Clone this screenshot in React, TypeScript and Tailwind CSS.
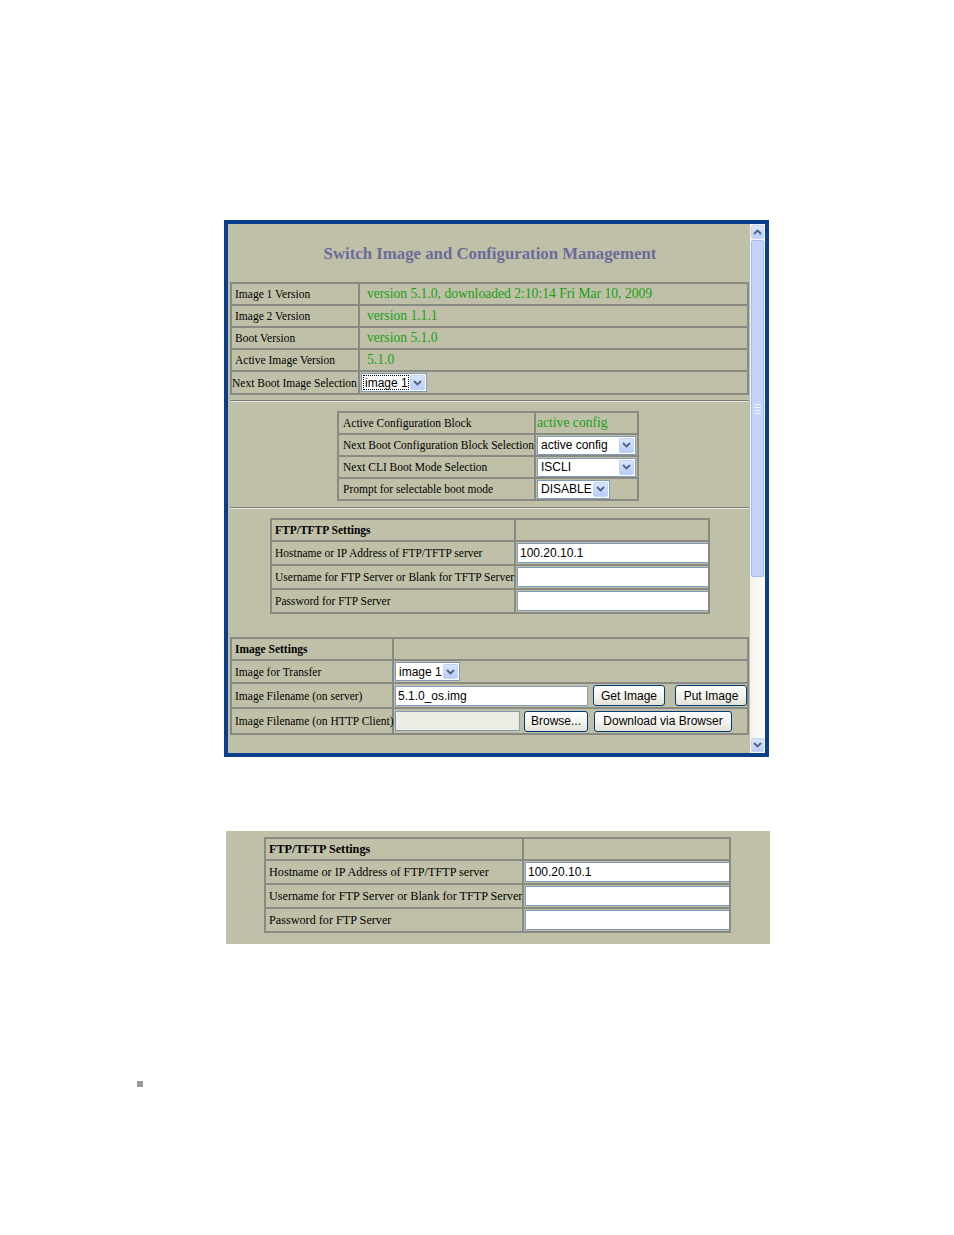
import React from "react";

const serif = { fontFamily: '"Liberation Serif", "Times New Roman", serif' };

const td = "border-2 border-[#8a8a84] align-middle p-0 text-[11.5px] leading-[12px] overflow-visible";
const label = "text-[11.5px] text-black leading-[12px] whitespace-nowrap";
const green = "text-[13.6px] text-[#15a015] leading-[14px] whitespace-nowrap";

function Chevron({ up = false }: { up?: boolean }) {
  return (
    <svg width="9" height="6" viewBox="0 0 9 6" className={up ? "rotate-180" : ""}>
      <path d="M1 1 L4.5 4.5 L8 1" fill="none" stroke="#4d6185" strokeWidth="1.8" />
    </svg>
  );
}

function Select({ value, w, focus = false }: { value: string; w: string; focus?: boolean }) {
  return (
    <div className={`${w} h-[19px] flex items-center bg-white border border-[#7f9db9] box-border`}>
      <div
        className={`flex-1 h-full flex items-center pl-[3px] text-[12px] leading-[14px] text-black whitespace-nowrap ${
          focus ? "outline-1 outline-dotted outline-black -outline-offset-2" : ""
        }`}
        style={{ fontFamily: '"Liberation Sans", Arial, sans-serif' }}
      >
        {value}
      </div>
      <div className="w-[15px] h-[15px] mr-[1px] flex items-center justify-center rounded-[2px] bg-gradient-to-b from-[#dbe6fd] to-[#b7cbf8] border border-[#c4d3f6]">
        <Chevron />
      </div>
    </div>
  );
}

function TextBox({ value = "", w, grey = false }: { value?: string; w: string; grey?: boolean }) {
  return (
    <div
      className={`${w} h-[20px] flex items-center pl-[2px] border border-[#7f9db9] text-[12px] leading-[14px] text-black ${
        grey ? "bg-[#ecebe4]" : "bg-white"
      }`}
      style={{ fontFamily: '"Liberation Sans", Arial, sans-serif' }}
    >
      {value}
    </div>
  );
}

function Btn({ children, w }: { children: React.ReactNode; w: string }) {
  return (
    <div
      className={`${w} h-[21px] flex items-center justify-center rounded-[3px] border border-[#003c74] bg-gradient-to-b from-white via-[#f5f4ef] to-[#e3e1d6] text-[12px] leading-[14px] text-black whitespace-nowrap`}
      style={{ fontFamily: '"Liberation Sans", Arial, sans-serif' }}
    >
      {children}
    </div>
  );
}

function Hr() {
  return <div className="h-[2px] border-t border-[#7d7d78] border-b border-b-[#e9e9dc] mr-[1px]" />;
}

function Scrollbar() {
  return (
    <div className="w-[15px] shrink-0 flex flex-col bg-[#f4f3ee] pt-[1px] pb-[1px]">
      <div className="h-[14px] shrink-0 mx-[1px] flex items-center justify-center rounded-[2px] bg-gradient-to-b from-[#dbe6fd] to-[#b9cdf9] border border-[#c4d3f6]">
        <Chevron up />
      </div>
      <div className="h-[337px] shrink-0 mx-[1px] mt-[1px] rounded-[2px] bg-[#c3d4fc] border border-[#a9bef0] flex flex-col items-center justify-center gap-[2px]">
        <div className="w-[7px] h-[1px] bg-[#eef3ff]" />
        <div className="w-[7px] h-[1px] bg-[#eef3ff]" />
        <div className="w-[7px] h-[1px] bg-[#eef3ff]" />
        <div className="w-[7px] h-[1px] bg-[#eef3ff]" />
      </div>
      <div className="flex-1 bg-gradient-to-r from-[#f3f1ea] to-[#fefefb]" />
      <div className="h-[14px] shrink-0 mx-[1px] flex items-center justify-center rounded-[2px] bg-gradient-to-b from-[#dbe6fd] to-[#b9cdf9] border border-[#c4d3f6]">
        <Chevron />
      </div>
    </div>
  );
}

function FtpTable({ big = false }: { big?: boolean }) {
  const lab = big ? "text-[12.2px] text-black leading-[13px] whitespace-nowrap" : label;
  const rows = [
    { l: "Hostname or IP Address of FTP/TFTP server", v: "100.20.10.1" },
    { l: "Username for FTP Server or Blank for TFTP Server", v: "" },
    { l: "Password for FTP Server", v: "" },
  ];
  return (
    <table
      className={`table-fixed border-collapse border-2 border-[#8a8a84] ${big ? "w-[467px]" : "w-[440px]"}`}
      style={serif}
    >
      <tbody>
        <tr className="h-[22px]">
          <td className={`${td} ${big ? "w-[258px]" : "w-[244px]"} pl-[3px]`}>
            <span className={`${lab} font-bold`}>FTP/TFTP Settings</span>
          </td>
          <td className={td} />
        </tr>
        {rows.map((r) => (
          <tr key={r.l} className="h-[24px]">
            <td className={`${td} pl-[3px]`}>
              <span className={lab}>{r.l}</span>
            </td>
            <td className={`${td} pl-[1px]`}>
              <TextBox value={r.v} w={big ? "w-[205px]" : "w-[193px]"} />
            </td>
          </tr>
        ))}
      </tbody>
    </table>
  );
}

export default function App() {
  const versions = [
    { l: "Image 1 Version", v: "version 5.1.0, downloaded 2:10:14 Fri Mar 10, 2009" },
    { l: "Image 2 Version", v: "version 1.1.1" },
    { l: "Boot Version", v: "version 5.1.0" },
    { l: "Active Image Version", v: "5.1.0" },
  ];

  return (
    <div className="w-[954px] h-[1235px] bg-white pt-[220px]" style={serif}>
      {/* browser frame */}
      <div className="ml-[224px] w-[545px] h-[537px] border-4 border-[#0b3f8b] bg-[#c0c0a8] flex">
        <div className="flex-1 overflow-hidden pl-[2px]">
          <div className="h-[58px] flex items-center justify-center pt-[2px]">
            <h1 className="text-[16.8px] leading-[20px] font-bold text-[#6b6b9b]">
              Switch Image and Configuration Management
            </h1>
          </div>

          <table className="table-fixed border-collapse border-2 border-[#8a8a84] w-[519px]">
            <tbody>
              {versions.map((r) => (
                <tr key={r.l} className="h-[22px]">
                  <td className={`${td} w-[128px] pl-[3px]`}>
                    <span className={label}>{r.l}</span>
                  </td>
                  <td className={`${td} pl-[7px]`}>
                    <span className={green}>{r.v}</span>
                  </td>
                </tr>
              ))}
              <tr className="h-[23px]">
                <td className={`${td}`}>
                  <span className={label}>Next Boot Image Selection</span>
                </td>
                <td className={`${td} pl-[1px]`}>
                  <Select value="image 1" w="w-[66px]" focus />
                </td>
              </tr>
            </tbody>
          </table>

          <div className="mt-[5px]">
            <Hr />
          </div>

          <div className="mt-[9px] flex justify-center pr-[4px]">
            <table className="border-collapse border-2 border-[#8a8a84]">
              <tbody>
                <tr className="h-[22px]">
                  <td className={`${td} w-[197px] pl-[4px]`}>
                    <span className={label}>Active Configuration Block</span>
                  </td>
                  <td className={`${td} w-[103px] pl-[1px]`}>
                    <span className="text-[13.6px] text-[#15a015] leading-[14px] whitespace-nowrap">active config</span>
                  </td>
                </tr>
                <tr className="h-[22px]">
                  <td className={`${td} pl-[4px]`}>
                    <span className={label}>Next Boot Configuration Block Selection</span>
                  </td>
                  <td className={`${td} pl-[1px]`}>
                    <Select value="active config" w="w-[99px]" />
                  </td>
                </tr>
                <tr className="h-[22px]">
                  <td className={`${td} pl-[4px]`}>
                    <span className={label}>Next CLI Boot Mode Selection</span>
                  </td>
                  <td className={`${td} pl-[1px]`}>
                    <Select value="ISCLI" w="w-[99px]" />
                  </td>
                </tr>
                <tr className="h-[22px]">
                  <td className={`${td} pl-[4px]`}>
                    <span className={label}>Prompt for selectable boot mode</span>
                  </td>
                  <td className={`${td} pl-[1px]`}>
                    <Select value="DISABLE" w="w-[73px]" />
                  </td>
                </tr>
              </tbody>
            </table>
          </div>

          <div className="mt-[6px]">
            <Hr />
          </div>

          <div className="mt-[9px] pl-[40px]">
            <FtpTable />
          </div>

          <table className="table-fixed mt-[23px] border-collapse border-2 border-[#8a8a84] w-[519px]">
            <tbody>
              <tr className="h-[22px]">
                <td className={`${td} w-[162px] pl-[3px]`}>
                  <span className={`${label} font-bold`}>Image Settings</span>
                </td>
                <td className={td} />
              </tr>
              <tr className="h-[23px]">
                <td className={`${td} pl-[3px]`}>
                  <span className={label}>Image for Transfer</span>
                </td>
                <td className={`${td} pl-[1px]`}>
                  <Select value="image 1" w="w-[65px]" />
                </td>
              </tr>
              <tr className="h-[25px]">
                <td className={`${td} pl-[3px]`}>
                  <span className={label}>Image Filename (on server)</span>
                </td>
                <td className={`${td} pl-[1px]`}>
                  <div className="flex items-center">
                    <TextBox value="5.1.0_os.img" w="w-[193px]" />
                    <div className="ml-[5px]">
                      <Btn w="w-[72px]">Get Image</Btn>
                    </div>
                    <div className="ml-[10px]">
                      <Btn w="w-[72px]">Put Image</Btn>
                    </div>
                  </div>
                </td>
              </tr>
              <tr className="h-[26px]">
                <td className={`${td} pl-[3px]`}>
                  <span className={label}>Image Filename (on HTTP Client)</span>
                </td>
                <td className={`${td} pl-[1px]`}>
                  <div className="flex items-center">
                    <TextBox w="w-[125px]" grey />
                    <div className="ml-[4px]">
                      <Btn w="w-[64px]">Browse...</Btn>
                    </div>
                    <div className="ml-[6px]">
                      <Btn w="w-[138px]">Download via Browser</Btn>
                    </div>
                  </div>
                </td>
              </tr>
            </tbody>
          </table>
        </div>
        <Scrollbar />
      </div>

      {/* cropped detail */}
      <div className="mt-[74px] ml-[226px] w-[544px] h-[113px] bg-[#c0c0a8] pt-[6px] pl-[38px]">
        <FtpTable big />
      </div>

      <div className="mt-[137px] ml-[137px] w-[6px] h-[6px] bg-[#9a9a94]" />
    </div>
  );
}
